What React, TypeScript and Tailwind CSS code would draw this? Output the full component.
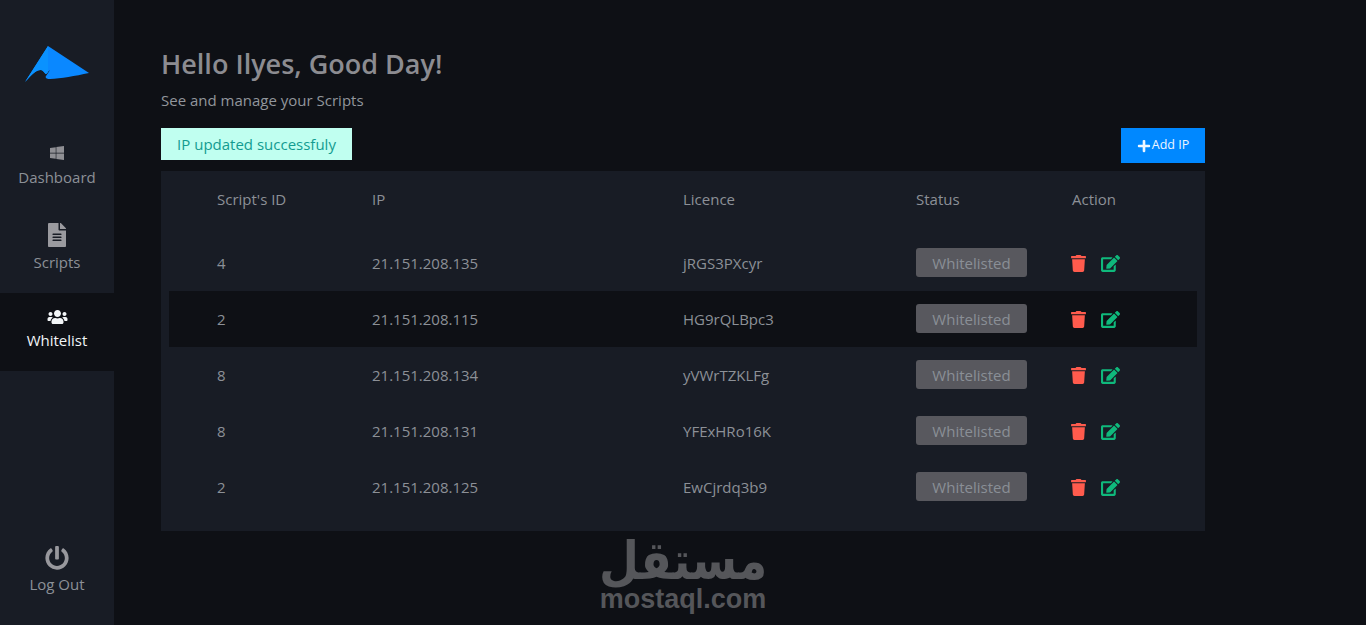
import { FaWindows, FaFileAlt, FaUsers, FaPowerOff, FaTrash, FaEdit, FaPlus } from "react-icons/fa";

const rows = [
  ["4", "21.151.208.135", "jRGS3PXcyr"],
  ["2", "21.151.208.115", "HG9rQLBpc3"],
  ["8", "21.151.208.134", "yVWrTZKLFg"],
  ["8", "21.151.208.131", "YFExHRo16K"],
  ["2", "21.151.208.125", "EwCjrdq3b9"],
];

function Logo() {
  return (
    <svg width="64" height="36" viewBox="0 0 64 36" className="block">
      <path d="M23 0 L64 27 C50 30 36 32.5 25 33 C21 33 20 31.5 21 30 L25 24 C23 25.5 22 28 20.7 28 C19 26.5 18 24 16 24 C10 24 6 30 0 36 Z" fill="#0a88ff" />
      <path d="M23 0 L0 36 C6 30 10 24 16 24 C18 24 19 26.5 20.7 28 C22 28 22.5 26.5 23 26 Z" fill="#0a92ff" />
    </svg>
  );
}

export default function App() {
  return (
    <div className="relative flex h-[625px] w-full overflow-hidden bg-[#0e1015] font-['Open_Sans','Noto_Sans',sans-serif] text-[15px] text-[#8c9097]">
      <aside className="flex w-[114px] shrink-0 flex-col bg-[#181c25]">
        <div className="flex h-[125px] items-start justify-center pt-[46px]">
          <Logo />
        </div>
        <div className="flex h-[85px] flex-col items-center pt-[20px]">
          <FaWindows className="h-[16px] w-[16px] text-[#8f8f94]" />
          <span className="mt-[6px] leading-[20px]">Dashboard</span>
        </div>
        <div className="flex h-[83px] flex-col items-center pt-[13px]">
          <FaFileAlt className="h-[24px] w-[18px] text-[#9a9a9f]" />
          <span className="mt-[5px] leading-[20px]">Scripts</span>
        </div>
        <div className="flex h-[78px] flex-col items-center bg-[#0e1015] pt-[16px] text-[#f2f5f7]">
          <FaUsers className="h-[16px] w-[21px]" />
          <span className="mt-[5px] leading-[20px]">Whitelist</span>
        </div>
        <div className="mt-auto flex flex-col items-center pb-[31px]">
          <FaPowerOff className="h-[24px] w-[24px] text-[#98989d]" />
          <span className="mt-[4px] leading-[20px]">Log Out</span>
        </div>
      </aside>

      <main className="ml-[47px] w-[1044px] shrink-0 pt-[46px]">
        <h1 className="text-[27px] font-semibold leading-[36px] text-[#8c8c91]">Hello Ilyes, Good Day!</h1>
        <p className="mt-[8px] leading-[20px] text-[#92969c]">See and manage your Scripts</p>
        <div className="mt-[18px] flex items-start justify-between">
          <div className="flex h-[32px] w-[191px] items-center justify-center bg-[#c0fff0] text-[#139c90]">IP updated successfuly</div>
          <button className="flex h-[35px] w-[84px] items-center justify-center gap-[1px] bg-[#0088ff] text-[12.5px] text-[#eef6ff]">
            <FaPlus className="h-[14px] w-[14px]" />
            Add IP
          </button>
        </div>
        <section className="mt-[8px] h-[360px] bg-[#181c25] px-[8px]">
          <div className="grid h-[64px] grid-cols-[155px_311px_233px_156px_1fr] items-start pl-[48px] pt-[18px] leading-[20px]">
            <span>Script's ID</span>
            <span>IP</span>
            <span>Licence</span>
            <span>Status</span>
            <span>Action</span>
          </div>
          {rows.map((r, i) => (
            <div
              key={i}
              className={`grid h-[56px] grid-cols-[155px_311px_233px_156px_1fr] items-center pl-[48px] ${i === 1 ? "bg-[#0e1015]" : ""}`}
            >
              <span>{r[0]}</span>
              <span>{r[1]}</span>
              <span>{r[2]}</span>
              <span className="-mt-[1px] flex h-[29px] w-[111px] items-center justify-center rounded-[3px] bg-[#58585e] pt-[1px] text-[#8a8f96]">Whitelisted</span>
              <span className="-ml-[1px] flex items-center gap-[15px]">
                <FaTrash className="h-[17px] w-[15px] text-[#ff5b4d]" />
                <FaEdit className="h-[17px] w-[19px] text-[#0fb97c]" />
              </span>
            </div>
          ))}
        </section>
      </main>

      <div className="absolute left-[600px] top-[532px] flex w-[166px] flex-col items-center text-[#55565a]">
        <span className="h-[54px] origin-bottom translate-y-[6px] scale-y-[1.15] font-['DejaVu_Sans',sans-serif] text-[46px] font-bold leading-[54px]" dir="rtl">مستقل</span>
        <span className="whitespace-nowrap font-['Liberation_Sans',sans-serif] text-[27px] font-bold leading-[26px]">mostaql.com</span>
      </div>
    </div>
  );
}
